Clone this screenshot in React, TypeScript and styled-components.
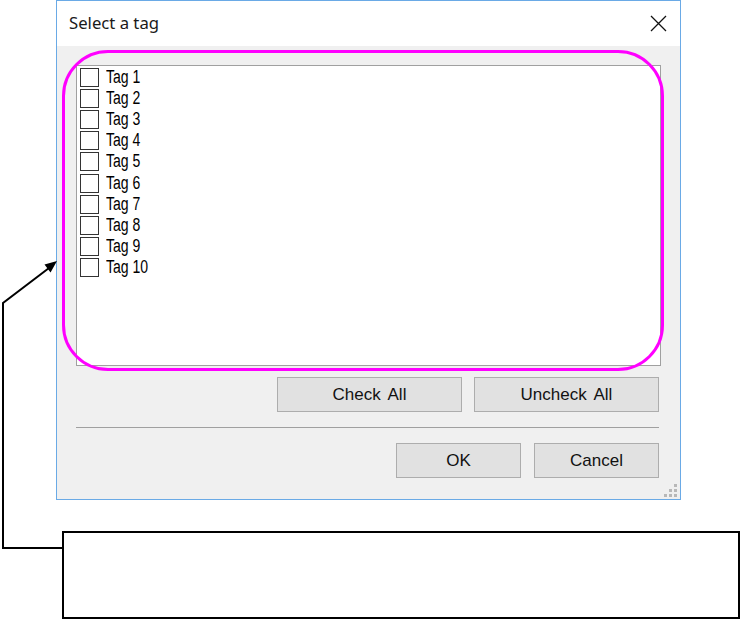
import React from "react";
import styled, { createGlobalStyle } from "styled-components";

const GlobalStyle = createGlobalStyle`
  html, body {
    margin: 0;
    padding: 0;
    background: #ffffff;
  }
`;

const tags = Array.from({ length: 10 }, (_, i) => `Tag ${i + 1}`);

// page = a figure from a manual: dialog + callout
const Page = styled.div`
  position: relative;
  width: 740px;
  height: 619px;
  overflow: hidden;
  background: #ffffff;
  display: flex;
  flex-direction: column;
`;

const Dialog = styled.div`
  position: relative;
  margin-left: 56px;
  width: 625px;
  height: 500px;
  box-sizing: border-box;
  border: 1px solid #6aaae6;
  display: flex;
  flex-direction: column;
  background: #f0f0f0;
`;

const TitleBar = styled.div`
  height: 45px;
  background: #ffffff;
  display: flex;
  align-items: center;
  justify-content: space-between;
  padding: 0 13px 2px 12px;
  box-sizing: border-box;
`;

const Title = styled.span`
  font-family: "Noto Sans", "Open Sans", sans-serif;
  font-size: 16.7px;
  color: #1a1a1a;
`;

const CloseButton = styled.div`
  width: 17px;
  height: 17px;
  display: flex;
  align-items: center;
  justify-content: center;
  margin-top: 1px;
`;

const Body = styled.div`
  flex: 1;
  display: flex;
  flex-direction: column;
  padding: 19px 19px 0 19px;
`;

const ListBox = styled.div`
  height: 301px;
  box-sizing: border-box;
  border: 1px solid #a0a0a0;
  background: #ffffff;
  padding: 1px 0 0 3px;
  display: flex;
  flex-direction: column;
`;

const Row = styled.label`
  height: 21.1px;
  display: flex;
  align-items: center;
  gap: 7px;
`;

const Box = styled.span`
  width: 19px;
  height: 19px;
  box-sizing: border-box;
  border: 1px solid #333333;
  background: #ffffff;
  flex-shrink: 0;
`;

const TagText = styled.span`
  display: inline-block;
  font-family: "Liberation Sans", Arial, sans-serif;
  font-size: 18px;
  color: #000000;
  transform: scaleX(0.78);
  transform-origin: left center;
`;

const ButtonRow = styled.div<{ $top: number; $gap: number }>`
  display: flex;
  justify-content: flex-end;
  gap: ${(p) => p.$gap}px;
  margin-top: ${(p) => p.$top}px;
  padding-right: 2px;
`;

const Button = styled.div<{ $width: number }>`
  width: ${(p) => p.$width}px;
  height: 35px;
  box-sizing: border-box;
  border: 1px solid #adadad;
  background: #e1e1e1;
  display: flex;
  align-items: center;
  justify-content: center;
  font-family: "Liberation Sans", Arial, sans-serif;
  font-size: 17px;
  word-spacing: 3px;
  color: #111111;
`;

const Separator = styled.div`
  margin-top: 15px;
  margin-right: 2px;
  height: 1px;
  background: #a0a0a0;
`;

const Grip = styled.svg`
  position: absolute;
  right: 3px;
  bottom: 2px;
`;

const Highlight = styled.div`
  position: absolute;
  left: 62px;
  top: 50px;
  width: 602px;
  height: 321px;
  box-sizing: border-box;
  border: 3px solid #ff00ff;
  border-radius: 46px;
  pointer-events: none;
`;

const Callout = styled.div`
  margin: 31px 0 0 62px;
  width: 678px;
  height: 88px;
  box-sizing: border-box;
  border: 2px solid #000000;
  background: #ffffff;
`;

const Leader = styled.svg`
  position: absolute;
  left: 0;
  top: 0;
  pointer-events: none;
`;

const CloseIcon = () => (
  <svg width="17" height="17" viewBox="0 0 17 17">
    <path d="M1 1 L16 16 M16 1 L1 16" stroke="#111" strokeWidth="1.3" fill="none" />
  </svg>
);

const GripIcon = () => (
  <Grip width="13" height="13" viewBox="0 0 13 13">
    {[
      [10, 0],
      [5, 5],
      [10, 5],
      [0, 10],
      [5, 10],
      [10, 10],
    ].map(([x, y]) => (
      <rect key={`${x}-${y}`} x={x} y={y} width="3" height="3" fill="#b8b8b8" />
    ))}
  </Grip>
);

export default function App() {
  return (
    <Page>
      <GlobalStyle />
      <Dialog>
        <TitleBar>
          <Title>Select a tag</Title>
          <CloseButton>
            <CloseIcon />
          </CloseButton>
        </TitleBar>
        <Body>
          <ListBox>
            {tags.map((t) => (
              <Row key={t}>
                <Box />
                <TagText>{t}</TagText>
              </Row>
            ))}
          </ListBox>
          <ButtonRow $top={11} $gap={12}>
            <Button $width={185}>Check All</Button>
            <Button $width={185}>Uncheck All</Button>
          </ButtonRow>
          <Separator />
          <ButtonRow $top={15} $gap={13}>
            <Button $width={125}>OK</Button>
            <Button $width={125}>Cancel</Button>
          </ButtonRow>
        </Body>
        <GripIcon />
      </Dialog>
      <Callout />
      <Highlight />
      <Leader width="740" height="619" viewBox="0 0 740 619">
        <path d="M63 548 H3 V303 L49 268" stroke="#000" strokeWidth="2" fill="none" />
        <polygon points="57,261 50.5,272.5 44.5,264.5" fill="#000" />
      </Leader>
    </Page>
  );
}
